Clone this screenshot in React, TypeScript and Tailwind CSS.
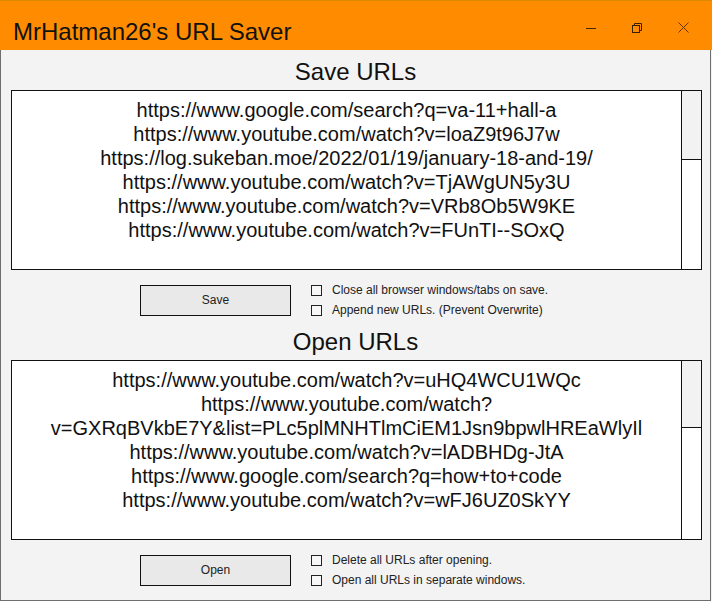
import React from 'react';

const saveUrls = [
  'https://www.google.com/search?q=va-11+hall-a',
  'https://www.youtube.com/watch?v=loaZ9t96J7w',
  'https://log.sukeban.moe/2022/01/19/january-18-and-19/',
  'https://www.youtube.com/watch?v=TjAWgUN5y3U',
  'https://www.youtube.com/watch?v=VRb8Ob5W9KE',
  'https://www.youtube.com/watch?v=FUnTI--SOxQ',
];

const openUrls = [
  'https://www.youtube.com/watch?v=uHQ4WCU1WQc',
  'https://www.youtube.com/watch?',
  'v=GXRqBVkbE7Y&list=PLc5plMNHTlmCiEM1Jsn9bpwlHREaWlyIl',
  'https://www.youtube.com/watch?v=lADBHDg-JtA',
  'https://www.google.com/search?q=how+to+code',
  'https://www.youtube.com/watch?v=wFJ6UZ0SkYY',
];

const UrlBox = ({ lines, thumb }: { lines: string[]; thumb: string }) => (
  <div className="ml-[10px] flex h-[180px] w-[691px] border border-[#111] bg-white">
    <div className="flex-1 pt-[7px] text-center text-[20px] leading-[24px] text-[#111]">
      {lines.map((line, i) => (
        <div key={i} className="whitespace-nowrap">{line}</div>
      ))}
    </div>
    {/* scrollbar */}
    <div className="flex w-[20px] flex-col border-l border-[#111]">
      <div className={`${thumb} border-b border-[#111] bg-[#f2f2f2]`} />
      <div className="flex-1 bg-white" />
    </div>
  </div>
);

const Check = ({ label }: { label: string }) => (
  <div className="flex h-[20px] items-center gap-[10px]">
    <div className="h-[11px] w-[11px] border border-[#222] bg-[#f7f7f7]" />
    <span className="text-[12px] text-[#222]">{label}</span>
  </div>
);

const Controls = ({ button, options }: { button: string; options: string[] }) => (
  <div className="flex h-[58px] items-center gap-[20px] pl-[139px] pt-[2px]">
    <button className="h-[31px] w-[151px] border border-[#111] bg-[#e9e9e9] text-[12px] text-[#222]">
      {button}
    </button>
    <div className="flex flex-col">
      {options.map((o) => (
        <Check key={o} label={o} />
      ))}
    </div>
  </div>
);

const Heading = ({ children }: { children: React.ReactNode }) => (
  <div className="mb-[4px] text-center text-[24px] leading-[28px] text-[#111]">{children}</div>
);

export default function App() {
  return (
    <div
      className="h-[601px] w-[712px] overflow-hidden bg-[#f3f3f3]"
      style={{ fontFamily: '"Liberation Sans", Arial, sans-serif' }}
    >
      {/* title bar */}
      <div className="flex h-[50px] w-[712px] border-t border-[#d98a00] bg-[#ff8c00]">
        <div className="flex-1 pl-[13px] pt-[17px] text-[24px] leading-[28px] text-[#111]">
          MrHatman26's URL Saver
        </div>
        <div className="mr-[6px] flex">
          <div className="flex h-[49px] w-[46px] items-center justify-center pt-[4px]">
            <svg width="10" height="10" viewBox="0 0 10 10">
              <line x1="0" y1="5.5" x2="10" y2="5.5" stroke="#4a2500" strokeWidth="1" />
            </svg>
          </div>
          <div className="flex h-[49px] w-[46px] items-center justify-center pt-[4px]">
            <svg width="10" height="10" viewBox="0 0 10 10">
              <path d="M2.5 2.5 V0.5 H9.5 V7.5 H7.5" fill="none" stroke="#3a1d00" strokeWidth="1" />
              <rect x="0.5" y="2.5" width="7" height="7" fill="none" stroke="#3a1d00" strokeWidth="1" />
            </svg>
          </div>
          <div className="flex h-[49px] w-[46px] items-center justify-center pt-[4px]">
            <svg width="11" height="11" viewBox="0 0 11 11">
              <path d="M0.5 0.5 L10.5 10.5 M10.5 0.5 L0.5 10.5" stroke="#6a3300" strokeWidth="1" />
            </svg>
          </div>
        </div>
      </div>

      {/* body */}
      <div className="h-[551px] w-[711px] border-x border-b border-[#6e6e6e] pt-[8px]">
        <Heading>Save URLs</Heading>
        <UrlBox lines={saveUrls} thumb="h-[69px]" />
        <Controls
          button="Save"
          options={['Close all browser windows/tabs on save.', 'Append new URLs. (Prevent Overwrite)']}
        />
        <Heading>Open URLs</Heading>
        <UrlBox lines={openUrls} thumb="h-[67px]" />
        <Controls
          button="Open"
          options={['Delete all URLs after opening.', 'Open all URLs in separate windows.']}
        />
      </div>
    </div>
  );
}
